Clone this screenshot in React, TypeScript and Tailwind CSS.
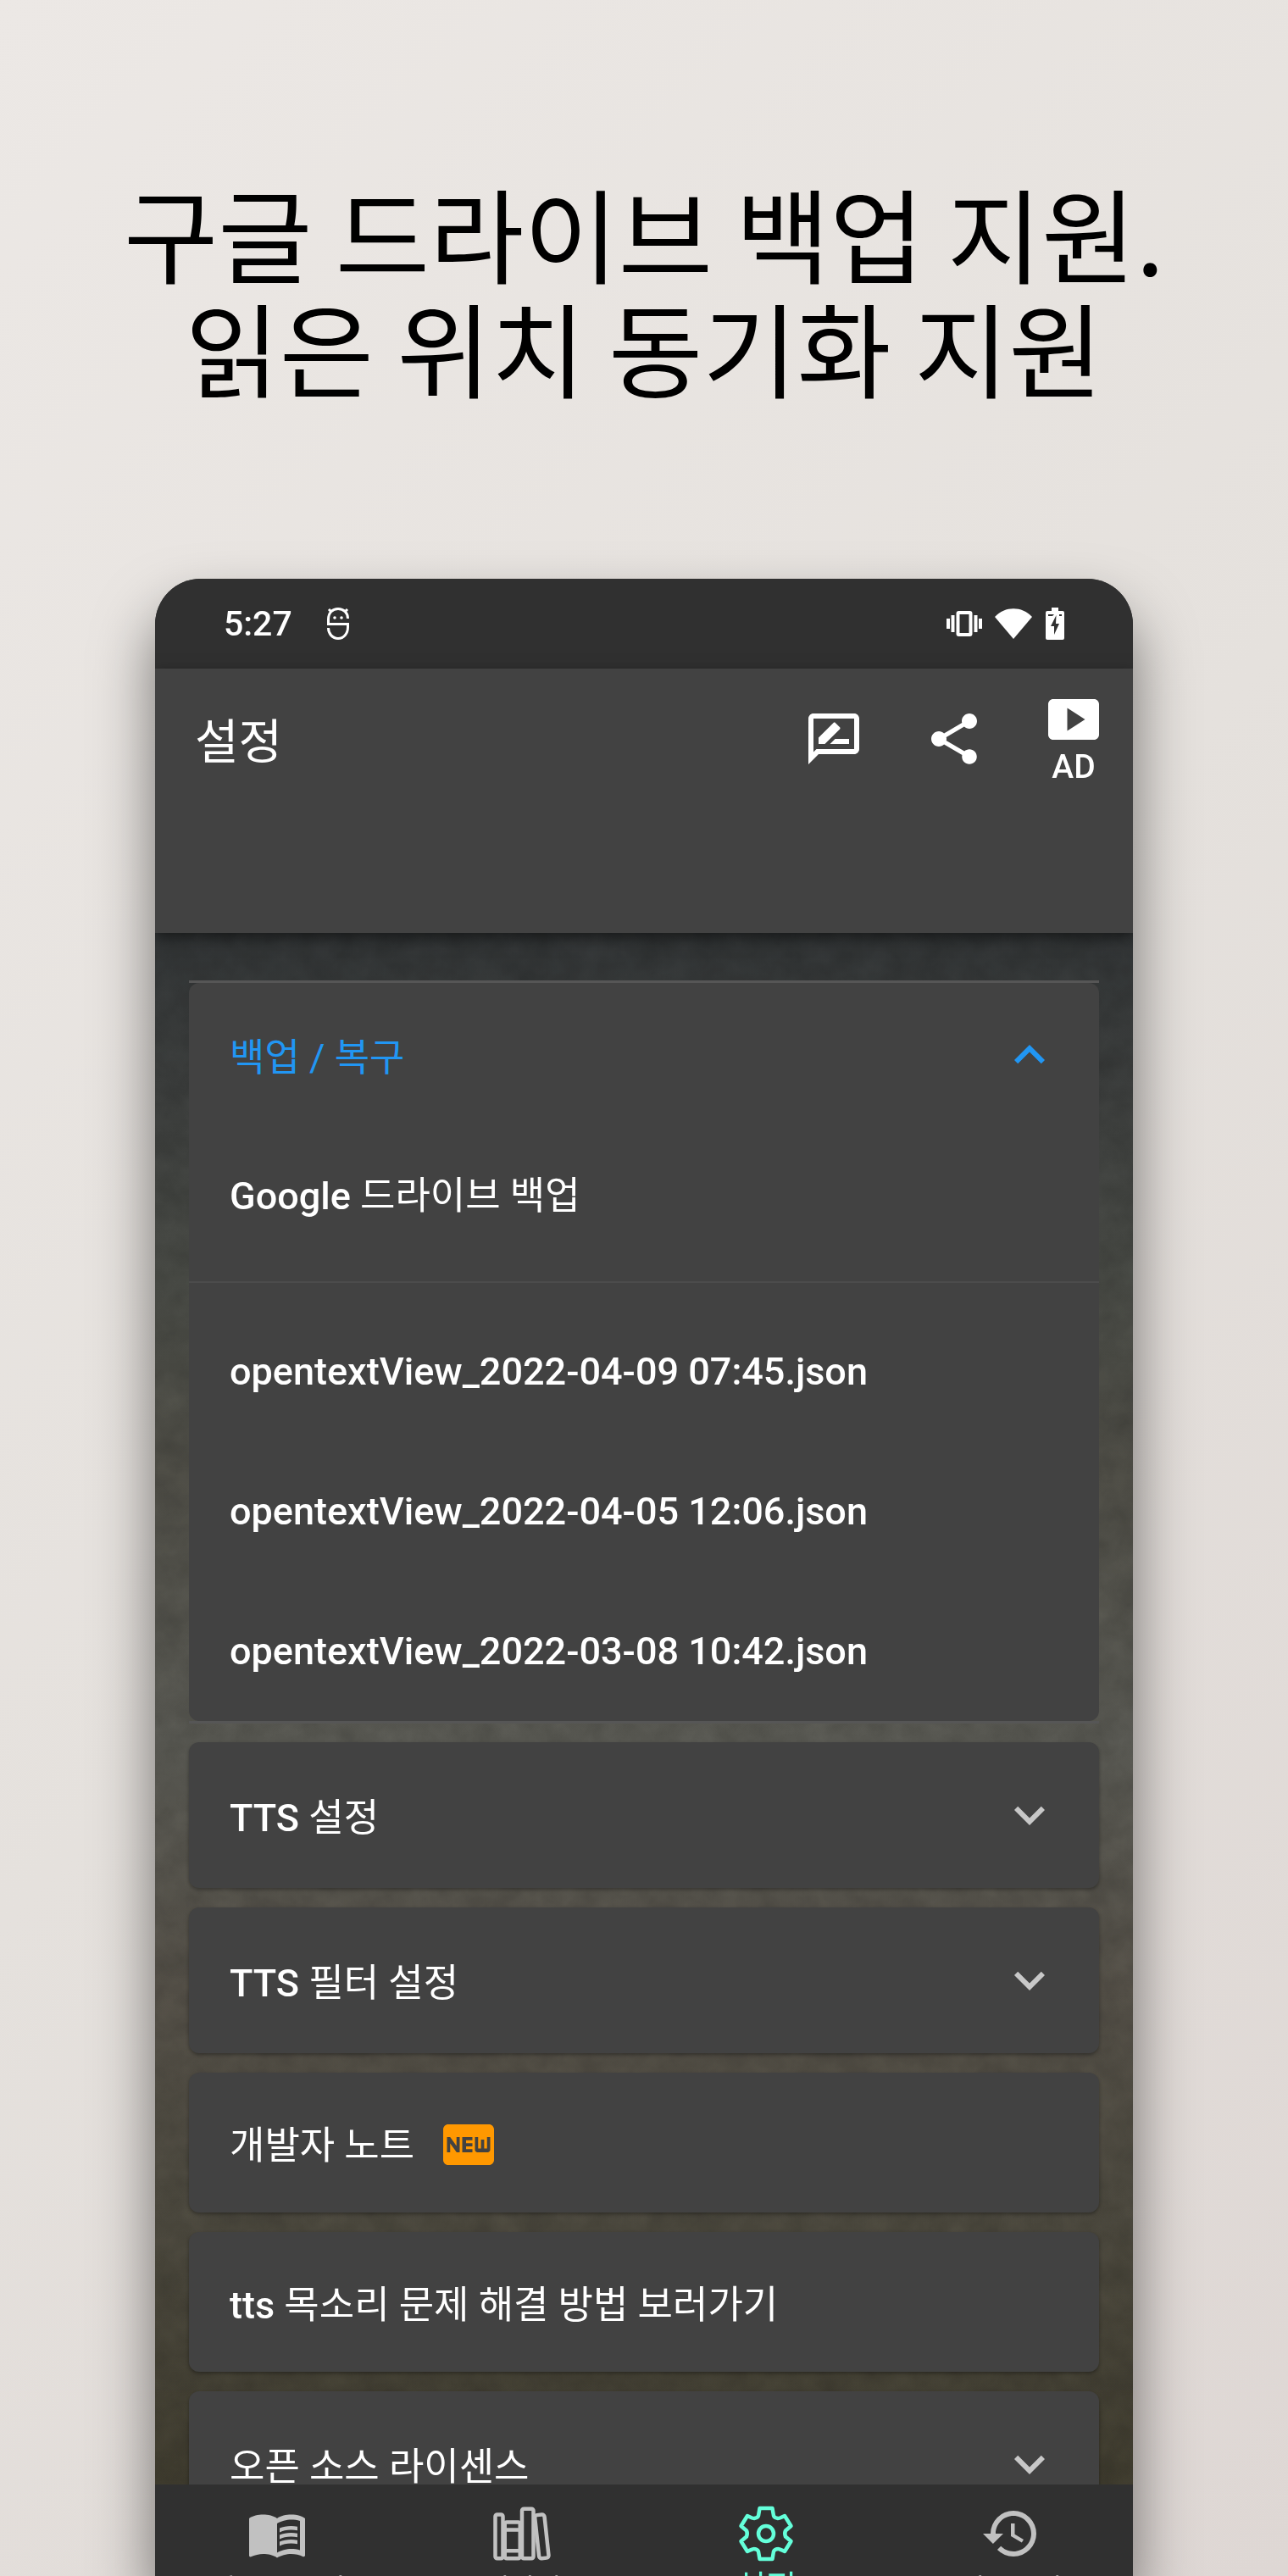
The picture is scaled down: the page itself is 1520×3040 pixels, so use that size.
import type { ReactNode } from "react";
import {
  MdExpandLess,
  MdExpandMore,
  MdFiberNew,
  MdHistory,
  MdMenuBook,
  MdOutlineRateReview,
  MdShare,
  MdSmartDisplay,
} from "react-icons/md";
import { IoLibraryOutline } from "react-icons/io5";

const backups = [
  "opentextView_2022-04-09 07:45.json",
  "opentextView_2022-04-05 12:06.json",
  "opentextView_2022-03-08 10:42.json",
];

function StatusBar() {
  return (
    <div className="flex h-[106px] shrink-0 items-center bg-[#303030] pr-20 pl-[81px] text-white">
      <span className="text-[41px] leading-[44px] font-medium">5:27</span>
      <svg viewBox="0 0 28 40" className="ml-10 h-10 w-7" fill="none" stroke="currentColor" strokeWidth="3">
        <path d="M2.500 19.500V15C2.500 7 7.500 2.500 14 2.500S25.500 7 25.500 14M1 20.500H25.500V24C25.500 32 20.500 37.500 14 37.500S2.500 32 2.500 25" />
        <path d="M3 3l3 3M25 3l-3 3" />
        <circle cx="10" cy="13" r="1.800" fill="currentColor" stroke="none" />
        <circle cx="18" cy="13" r="1.800" fill="currentColor" stroke="none" />
      </svg>
      <div className="ml-auto flex items-center gap-[15px]">
        <svg viewBox="0 0 42 32" className="h-8 w-[42px]" fill="currentColor">
          <path d="M0 10h4v12H0zM5.500 6h4v20h-4zM32.500 6h4v20h-4zM38 10h4v12h-4z" />
          <rect x="13.500" y="3" width="15" height="26" rx="1" fill="none" stroke="currentColor" strokeWidth="4" />
        </svg>
        <svg viewBox="0 0 44 38" className="h-[38px] w-11" fill="currentColor">
          <path d="M0 11C12-2 32-2 44 11L22 37z" />
        </svg>
        <svg viewBox="0 0 24 38" className="h-[38px] w-6" fill="currentColor">
          <path
            fillRule="evenodd"
            d="M8 0h8v4h5q2 0 2 2v30q0 2-2 2H3q-2 0-2-2V6q0-2 2-2h5zM4 8v2h5l2-2zM17 8v2h3V8zM13.500 9L7 22h4v10l6-13h-4z"
          />
        </svg>
      </div>
    </div>
  );
}

function AppBar() {
  return (
    <header className="relative z-10 flex h-[312px] shrink-0 items-start bg-[#424242] pt-8 pr-[34px] pl-[47px] text-white shadow-[0_6px_16px_rgba(0,0,0,0.5)]">
      <h2 className="pt-[23px] text-[56px] leading-[64px]">설정</h2>
      <div className="ml-auto flex items-start">
        <button type="button" aria-label="리뷰" className="mt-[15px] mr-[70px]">
          <MdOutlineRateReview className="size-[72px]" />
        </button>
        <button type="button" aria-label="공유" className="mt-[15px] mr-[69px]">
          <MdShare className="size-[72px]" />
        </button>
        <button type="button" className="flex flex-col items-center">
          <MdSmartDisplay className="-mt-2 size-[72px]" />
          <span className="text-[39px] leading-[40px] font-medium">AD</span>
        </button>
      </div>
    </header>
  );
}

function Texture() {
  return (
    <svg className="absolute inset-0 size-full opacity-15 mix-blend-overlay" aria-hidden="true">
      <filter id="grain" colorInterpolationFilters="sRGB">
        <feTurbulence type="fractalNoise" baseFrequency="0.030" numOctaves="5" seed="4" />
        <feColorMatrix type="saturate" values="0" />
        <feComponentTransfer>
          <feFuncA type="linear" slope="0" intercept="1" />
        </feComponentTransfer>
      </filter>
      <rect width="100%" height="100%" filter="url(#grain)" />
    </svg>
  );
}

function Label({ latin, children }: { latin?: string; children?: ReactNode }) {
  return (
    <span className="text-[45px] leading-[52px]">
      {latin && <span className="font-medium">{latin} </span>}
      {children}
    </span>
  );
}

function Card({ chevron, children }: { chevron?: boolean; children: ReactNode }) {
  return (
    <button
      type="button"
      className={
        "flex w-full shrink-0 items-center rounded-xl bg-[#424242] pr-[46px] pl-12 text-left shadow-[0_2px_4px_rgba(0,0,0,0.35)] " +
        (chevron ? "h-[172px]" : "h-[165px]")
      }
    >
      <span className="flex pt-2">{children}</span>
      {chevron && <MdExpandMore className="ml-auto size-[72px] text-[#c8c8c8]" />}
    </button>
  );
}

function Gear() {
  return (
    <svg
      viewBox="-36 -36 72 72"
      className="size-[72px] shrink-0"
      fill="none"
      stroke="currentColor"
      strokeWidth="4.500"
      strokeLinejoin="round"
    >
      <path d="M-7.500-30H7.500L9-21Q10-18.500 14-18Q15-17.800 22-21L29.500-9L23-3.500Q21.500 0 23 3.500L29.500 9L22 21Q15 17.800 14 18Q10 18.500 9 21L7.500 30H-7.500L-9 21Q-10 18.500-14 18Q-15 17.800-22 21L-29.500 9L-23 3.500Q-21.500 0-23-3.500L-29.500-9L-22-21Q-15-17.800-14-18Q-10-18.500-9-21Z" />
      <circle r="9" />
    </svg>
  );
}

function NavItem({ icon, label, active }: { icon: ReactNode; label: string; active?: boolean }) {
  return (
    <button
      type="button"
      className={
        "flex flex-1 flex-col items-center justify-start pt-[22px] " + (active ? "text-[#64ffda]" : "text-[#c1c1c1]")
      }
    >
      {icon}
      <span
        className={
          active
            ? "mt-1.5 text-[39px] leading-[44px] whitespace-nowrap"
            : "mt-2 text-[33px] leading-[44px] whitespace-nowrap"
        }
      >
        {label}
      </span>
    </button>
  );
}

export default function App() {
  return (
    <div className="flex h-screen flex-col overflow-hidden bg-linear-135 from-[#ece8e5] via-[#e5e1dd] to-[#ded7d4] font-['Roboto','Noto_Sans_CJK_KR',sans-serif]">
      <h1 className="shrink-0 pt-[205px] text-center font-['Noto_Sans_CJK_KR',sans-serif] text-[121px] leading-[135px] text-black">
        구글 드라이브 백업 지원.
        <br />
        읽은 위치 동기화 지원
      </h1>

      <main className="mx-[183px] mt-[208px] flex min-h-0 flex-1 flex-col overflow-hidden rounded-t-[54px] bg-[#424242] shadow-[0_40px_70px_rgba(0,0,0,0.5)]">
        <StatusBar />
        <AppBar />

        <section className="relative min-h-0 flex-1 overflow-hidden bg-[linear-gradient(#2f3233,#393b3a_10%,#444641_22%,#4b4a43_35%,#55554f_52%,#504c44_68%,#49463c_82%,#3c392c)] px-10 pt-14">
          <Texture />
          <div className="relative flex flex-col">
            <div className="shrink-0 border-y-3 border-[#565656] text-white">
              <div className="rounded-xl bg-[#424242]">
                <button type="button" className="flex h-[169px] w-full items-center pr-[46px] pl-12 text-[#2196f3]">
                  <span className="flex pt-2">
                    <Label>백업 / 복구</Label>
                  </span>
                  <MdExpandLess className="ml-auto size-[72px]" />
                </button>
                <button type="button" className="flex h-[165px] w-full items-center pl-12">
                  <Label latin="Google">드라이브 백업</Label>
                </button>
                <hr className="mt-[18px] mb-[22px] border-t-2 border-[#4c4c4c]" />
                {backups.map((name) => (
                  <button key={name} type="button" className="flex h-[165px] w-full items-center pl-12">
                    <Label latin={name} />
                  </button>
                ))}
              </div>
            </div>

            <div className="mt-[22px] flex flex-col gap-[23px] text-white">
              <Card chevron>
                <Label latin="TTS">설정</Label>
              </Card>
              <Card chevron>
                <Label latin="TTS">필터 설정</Label>
              </Card>
              <Card>
                <Label>개발자 노트</Label>
                <MdFiberNew className="-my-3 ml-7 size-[72px] text-[#ff9800]" />
              </Card>
              <Card>
                <Label latin="tts">목소리 문제 해결 방법 보러가기</Label>
              </Card>
              <Card chevron>
                <Label>오픈 소스 라이센스</Label>
              </Card>
            </div>
          </div>
        </section>

        <nav className="relative flex h-27 shrink-0 overflow-hidden bg-[#303030]">
          <NavItem icon={<MdMenuBook className="size-[72px] shrink-0" />} label="텍스트 뷰어" />
          <NavItem icon={<IoLibraryOutline className="size-[72px] shrink-0" />} label="내서재" />
          <NavItem icon={<Gear />} label="설정" active />
          <NavItem icon={<MdHistory className="size-[72px] shrink-0" />} label="히스토리" />
        </nav>
      </main>
    </div>
  );
}
